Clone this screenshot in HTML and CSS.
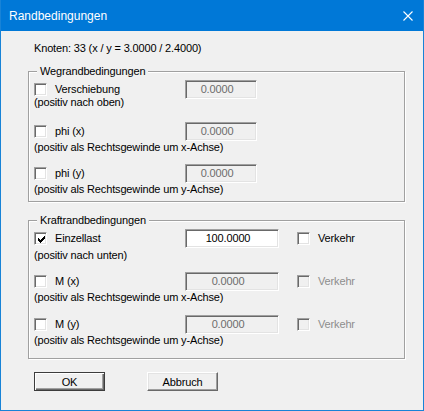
FILE: index.html
```html
<!DOCTYPE html>
<html lang="de">
<head>
    <meta charset="UTF-8">
    <meta name="viewport" content="width=device-width, initial-scale=1.0">
    <title>Randbedingungen</title>
    <link rel="stylesheet" href="styles.css">
</head>
<body>
    <div class="window">
        <div class="titlebar">
            <span class="title">Randbedingungen</span>
            <svg class="close" width="10" height="10" viewBox="0 0 10 10">
                <path d="M0.5 0.5 L9.5 9.5 M9.5 0.5 L0.5 9.5" stroke="#fff" stroke-width="1.1" fill="none"/>
            </svg>
        </div>
        <div class="dialog">
            <p class="node">Knoten: 33 (x / y = 3.0000 / 2.4000)</p>

            <fieldset class="group group-weg">
                <legend>Wegrandbedingungen</legend>
                <div class="item item-first">
                    <div class="row">
                        <span class="check"></span>
                        <span class="label">Verschiebung</span>
                        <span class="field disabled">0.0000</span>
                    </div>
                    <div class="desc">(positiv nach oben)</div>
                </div>
                <div class="item">
                    <div class="row">
                        <span class="check"></span>
                        <span class="label">phi (x)</span>
                        <span class="field disabled">0.0000</span>
                    </div>
                    <div class="desc">(positiv als Rechtsgewinde um x-Achse)</div>
                </div>
                <div class="item">
                    <div class="row">
                        <span class="check"></span>
                        <span class="label">phi (y)</span>
                        <span class="field disabled">0.0000</span>
                    </div>
                    <div class="desc">(positiv als Rechtsgewinde um y-Achse)</div>
                </div>
            </fieldset>

            <fieldset class="group group-kraft">
                <legend>Kraftrandbedingungen</legend>
                <div class="item item-load">
                    <div class="row">
                        <span class="check checked">
                            <svg width="7" height="7" viewBox="0 0 7 7" shape-rendering="crispEdges">
                                <path d="M0 2H1V3H2V4H3V3H4V2H5V1H6V0H7V3H6V4H5V5H4V6H3V7H2V6H1V5H0Z" fill="#000"/>
                            </svg>
                        </span>
                        <span class="label">Einzellast</span>
                        <span class="field field-wide">100.0000</span>
                        <span class="traffic">
                            <span class="check"></span>
                            <span>Verkehr</span>
                        </span>
                    </div>
                    <div class="desc">(positiv nach unten)</div>
                </div>
                <div class="item">
                    <div class="row">
                        <span class="check"></span>
                        <span class="label">M (x)</span>
                        <span class="field field-wide disabled">0.0000</span>
                        <span class="traffic disabled">
                            <span class="check"></span>
                            <span>Verkehr</span>
                        </span>
                    </div>
                    <div class="desc">(positiv als Rechtsgewinde um x-Achse)</div>
                </div>
                <div class="item">
                    <div class="row">
                        <span class="check"></span>
                        <span class="label">M (y)</span>
                        <span class="field field-wide disabled">0.0000</span>
                        <span class="traffic disabled">
                            <span class="check"></span>
                            <span>Verkehr</span>
                        </span>
                    </div>
                    <div class="desc">(positiv als Rechtsgewinde um y-Achse)</div>
                </div>
            </fieldset>

            <div class="buttons">
                <button type="button" class="btn btn-default">OK</button>
                <button type="button" class="btn">Abbruch</button>
            </div>
        </div>
    </div>
</body>
</html>
```

FILE: styles.css
```css
body {
    margin: 0;
    background-color: #f0f0f0;
    font-family: "Liberation Sans", Arial, sans-serif;
}

.window {
    width: 422px;
    height: 410px;
    border: 1px solid #1883d7;
    border-top: 0;
    background-color: #f0f0f0;
}

.titlebar {
    height: 31px;
    padding: 0 10px 0 8px;
    display: flex;
    align-items: center;
    justify-content: space-between;
    background-color: #0078d7;
    color: #fff;
    font-size: 12px;
}

.close {
    display: block;
}

.dialog {
    height: 379px;
    box-sizing: border-box;
    padding: 11px 18px 0 27px;
    font-size: 11px;
    line-height: 13px;
    letter-spacing: -0.15px;
    color: #000;
}

.node {
    margin: 0 0 10px 6px;
}

/* Gruppenrahmen */
.group {
    margin: 0;
    min-width: 0;
    padding: 2px 4px 5px 5px;
    border: 1px solid #a0a0a0;
    box-shadow: inset 1px 1px 0 #fff, 1px 1px 0 #fff;
}

.group legend {
    margin-left: 3px;
    padding: 0 3px;
    line-height: 13px;
    background-color: #f0f0f0;
}

.group-kraft {
    margin-top: 12px;
    padding-bottom: 11px;
}

.item {
    height: 42px;
}

.group-kraft .item {
    height: 43px;
}

.group .item:last-child {
    height: auto;
}

.row {
    display: flex;
    align-items: center;
    height: 19px;
}

.desc {
    margin-top: 0;
}

.item-first .desc {
    margin-top: -3px;
}

.item-load .desc {
    margin-top: 1px;
}

/* Kontrollkaestchen */
.check {
    flex: none;
    width: 13px;
    height: 13px;
    box-sizing: border-box;
    margin-right: 8px;
    display: flex;
    align-items: center;
    justify-content: center;
    border: 1px solid;
    border-color: #a0a0a0 #fff #fff #a0a0a0;
    box-shadow: inset 1px 1px 0 #696969, inset -1px -1px 0 #e3e3e3;
    background-color: #fff;
}

.check svg {
    display: block;
    margin: 1px 0 0 1px;
}

.label {
    width: 130px;
    flex: none;
}

/* Eingabefelder */
.field {
    flex: none;
    width: 72px;
    height: 19px;
    box-sizing: border-box;
    padding-right: 8px;
    border: 1px solid;
    border-color: #a0a0a0 #fff #fff #a0a0a0;
    box-shadow: inset 1px 1px 0 #696969, inset -1px -1px 0 #e3e3e3;
    background-color: #fff;
    line-height: 17px;
    text-align: center;
}

.field-wide {
    width: 94px;
}

.field.disabled {
    background-color: #f0f0f0;
    color: #6d6d6d;
}

.traffic {
    display: flex;
    align-items: center;
    margin-left: 18px;
}

.traffic.disabled {
    color: #8d8d8d;
}

.traffic.disabled .check {
    background-color: #f0f0f0;
}

/* Schaltflaechen */
.buttons {
    display: flex;
    gap: 42px;
    margin: 13px 0 0 6px;
}

.btn {
    width: 71px;
    height: 19px;
    padding: 0;
    box-sizing: border-box;
    border: 1px solid;
    border-color: #fff #696969 #696969 #fff;
    box-shadow: inset -1px -1px 0 #a0a0a0, inset 1px 1px 0 #e3e3e3;
    background-color: #f0f0f0;
    font-family: "Liberation Sans", Arial, sans-serif;
    font-size: 11px;
    letter-spacing: -0.15px;
    color: #000;
}

.btn-default {
    border-color: #3c3c3c;
    box-shadow: inset 1px 1px 0 #fff, inset -1px -1px 0 #696969, inset -2px -2px 0 #a0a0a0;
}
```
